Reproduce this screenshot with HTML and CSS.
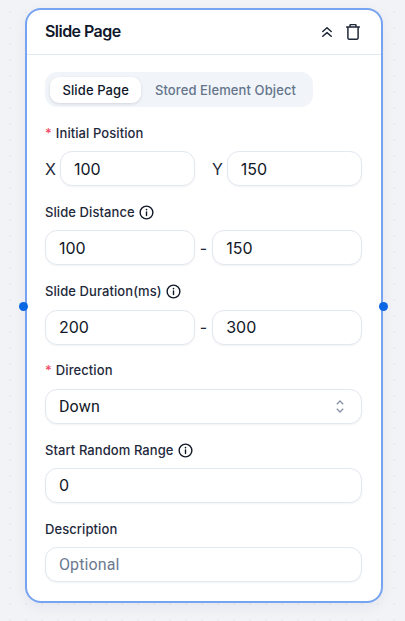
FILE: index.html
```html
<!DOCTYPE html>
<html lang="en">
<head>
<meta charset="utf-8">
<title>Slide Page</title>
<link rel="stylesheet" href="styles.css">
</head>
<body>
<div class="card">
  <span class="handle handle-left"></span>
  <span class="handle handle-right"></span>
  <header class="card-head">
    <h1 class="title">Slide Page</h1>
    <div class="actions">
      <svg class="icon-collapse" viewBox="0 0 10 10" width="10" height="10"><path d="M.8 4.500 5 .8l4.200 3.700M.8 9.300 5 5.600l4.200 3.700"/></svg>
      <svg class="icon-trash" viewBox="0 0 14 16" width="14" height="16"><path d="M.5 3h13M4 3V1.500C4 .9 4.400.6 5 .6h4c.6 0 1 .3 1 .9V3M1.900 3v10.700c0 .9.700 1.600 1.600 1.600h7c.9 0 1.600-.7 1.600-1.600V3"/></svg>
    </div>
  </header>
  <div class="card-body">
    <div class="tabs">
      <div class="tab tab-active">Slide Page</div>
      <div class="tab">Stored Element Object</div>
    </div>

    <div class="field">
      <div class="label"><span class="req">*</span>Initial Position</div>
      <div class="pos-row">
        <div class="pos-item"><span class="axis">X</span><div class="input">100</div></div>
        <div class="pos-item"><span class="axis">Y</span><div class="input">150</div></div>
      </div>
    </div>

    <div class="field">
      <div class="label">Slide Distance
        <svg class="info" viewBox="0 0 16 16" width="15" height="15"><circle cx="8" cy="8" r="6.800"/><path d="M8 7.300v4"/><circle class="dot" cx="8" cy="4.900" r=".9"/></svg>
      </div>
      <div class="range-row"><div class="input">100</div><span class="dash">-</span><div class="input">150</div></div>
    </div>

    <div class="field">
      <div class="label">Slide Duration(ms)
        <svg class="info" viewBox="0 0 16 16" width="15" height="15"><circle cx="8" cy="8" r="6.800"/><path d="M8 7.300v4"/><circle class="dot" cx="8" cy="4.900" r=".9"/></svg>
      </div>
      <div class="range-row"><div class="input">200</div><span class="dash">-</span><div class="input">300</div></div>
    </div>

    <div class="field">
      <div class="label"><span class="req">*</span>Direction</div>
      <div class="input select text-alt">Down
        <svg class="chevrons" viewBox="0 0 8 13" width="8" height="13"><path d="M.8 4.300 4 1l3.200 3.300M.8 8.700 4 12l3.200-3.300"/></svg>
      </div>
    </div>

    <div class="field">
      <div class="label">Start Random Range
        <svg class="info" viewBox="0 0 16 16" width="15" height="15"><circle cx="8" cy="8" r="6.800"/><path d="M8 7.300v4"/><circle class="dot" cx="8" cy="4.900" r=".9"/></svg>
      </div>
      <div class="input">0</div>
    </div>

    <div class="field">
      <div class="label">Description</div>
      <div class="input placeholder text-alt">Optional</div>
    </div>
  </div>
</div>
</body>
</html>
```

FILE: styles.css
```css
* { box-sizing: border-box; }

html, body { height: 100%; }

body {
  margin: 0;
  padding: 8px 23px 19px 25px;
  overflow: hidden;
  font-family: Inter, "Liberation Sans", sans-serif;
  color: #111827;
  background-color: #f2f3f7;
  background-image: radial-gradient(circle, #e9ebf0 0.7px, transparent 1px);
  background-size: 16px 16px;
  background-position: 2px 4px;
}

.card {
  position: relative;
  width: 357.500px;
  height: 594.500px;
  background: #fff;
  border: 2px solid #76a4f0;
  border-radius: 16px;
  box-shadow: 0 4px 14px rgba(30, 41, 70, 0.06);
}

.handle {
  position: absolute;
  top: 291.500px;
  width: 9px;
  height: 9px;
  border-radius: 50%;
  background: #0b66e4;
}
.handle-left { left: -8.500px; }
.handle-right { right: -7.500px; }

.card-head {
  display: flex;
  align-items: center;
  justify-content: space-between;
  height: 45px;
  padding: 0 20.500px 2px 18px;
  border-bottom: 1px solid #e2e8f0;
}

.title {
  margin: 0;
  font-size: 16px;
  font-weight: 600;
  letter-spacing: -0.55px;
  color: #0f172a;
}

.actions { display: flex; align-items: center; gap: 14px; position: relative; top: 1px; }

.actions svg { fill: none; stroke: #1f2937; stroke-linecap: round; stroke-linejoin: round; }
.icon-collapse { stroke-width: 1.500; }
.icon-trash { stroke-width: 1.500; }

.card-body { padding: 17px 18.500px 0 18px; }

.tabs {
  display: inline-flex;
  align-items: center;
  height: 35px;
  padding: 0 4px 0 5px;
  border-radius: 12px;
  background: #f1f5f9;
}

.tab {
  height: 26px;
  padding: 0 13px 0 13.500px;
  font-size: 13px;
  font-weight: 500;
  line-height: 26px;
  letter-spacing: 0.1px;
  color: #64748b;
  border-radius: 9px;
}

.tab-active {
  padding: 0 12.500px;
  color: #0f172a;
  background: #fff;
  box-shadow: 0 1px 3px rgba(15, 23, 42, 0.14);
}

.field { margin-top: 17.900px; }

.label {
  display: flex;
  align-items: center;
  height: 17px;
  margin-bottom: 9.300px;
  font-size: 13px;
  font-weight: 500;
  line-height: 17px;
  letter-spacing: 0.08px;
  color: #1e293b;
  white-space: nowrap;
}

.req { margin-right: 4px; color: #f4485f; }

.info {
  margin-left: 4px;
  fill: none;
  stroke: #111827;
  stroke-width: 1.500;
  stroke-linecap: round;
}
.info .dot { fill: #111827; stroke: none; }

.input {
  display: flex;
  align-items: center;
  height: 35px;
  padding: 0 13px;
  border: 1px solid #e2e8f0;
  border-radius: 12px;
  background: #fff;
  box-shadow: 0 1px 2px rgba(15, 23, 42, 0.05);
  font-size: 16px;
  color: #111827;
}

.pos-row { display: flex; gap: 17px; }
.pos-item { display: flex; flex: 1; align-items: center; gap: 4px; }
.pos-item .input { flex: 1; }
.axis { font-size: 16px; color: #1e293b; }

.range-row { display: flex; align-items: center; gap: 5px; }
.range-row .input { flex: 1; }
.dash { font-size: 16px; color: #1e293b; }

.text-alt { font-family: Roboto, Inter, sans-serif; letter-spacing: 0.1px; }

.select { justify-content: space-between; padding-right: 17px; }
.chevrons { fill: none; stroke: #8a93a3; stroke-width: 1.300; }

.placeholder { color: #6b7a90; }
```
